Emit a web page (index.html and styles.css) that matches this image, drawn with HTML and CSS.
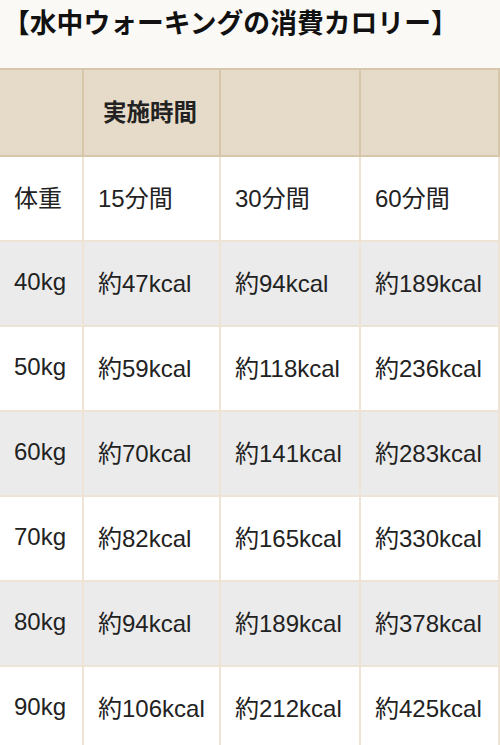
FILE: index.html
```html
<!DOCTYPE html>
<html lang="ja">
<head>
<meta charset="utf-8">
<link rel="stylesheet" href="styles.css">
</head>
<body>
<div class="page">
  <h2 class="title">【水中ウォーキングの消費カロリー】</h2>
  <table class="kcal">
    <colgroup>
      <col class="c1"><col class="c2"><col class="c3"><col class="c4">
    </colgroup>
    <thead>
      <tr><th></th><th>実施時間</th><th></th><th></th></tr>
    </thead>
    <tbody>
      <tr><td>体重</td><td>15分間</td><td>30分間</td><td>60分間</td></tr>
      <tr class="alt"><td>40kg</td><td>約47kcal</td><td>約94kcal</td><td>約189kcal</td></tr>
      <tr><td>50kg</td><td>約59kcal</td><td>約118kcal</td><td>約236kcal</td></tr>
      <tr class="alt"><td>60kg</td><td>約70kcal</td><td>約141kcal</td><td>約283kcal</td></tr>
      <tr><td>70kg</td><td>約82kcal</td><td>約165kcal</td><td>約330kcal</td></tr>
      <tr class="alt"><td>80kg</td><td>約94kcal</td><td>約189kcal</td><td>約378kcal</td></tr>
      <tr><td>90kg</td><td>約106kcal</td><td>約212kcal</td><td>約425kcal</td></tr>
    </tbody>
  </table>
</div>
</body>
</html>
```
FILE: styles.css
```css
html, body {
  margin: 0;
  padding: 0;
  background: #fbf9f6;
}
body {
  font-family: "Liberation Sans", "Noto Sans CJK JP", sans-serif;
  color: #222;
  overflow: hidden;
}
.page {
  width: 500px;
}
.title {
  margin: 0 0 26px 0;
  padding: 6px 0 0 3px;
  font-size: 26.8px;
  line-height: 36px;
  font-weight: bold;
  color: #111;
}
.kcal {
  border-collapse: collapse;
  table-layout: fixed;
  width: 500px;
  margin-left: -2px;
  font-size: 24px;
}
.c1 { width: 84px; }
.c2 { width: 137px; }
.c3 { width: 140px; }
.c4 { width: 139px; }
.kcal th, .kcal td {
  height: 85px;
  padding: 0 0 4px 14px;
  text-align: left;
  vertical-align: middle;
  box-sizing: border-box;
}
.kcal th {
  height: 87px;
  padding-left: 19px;
  background: #e6dbc8;
  border: 2px solid #d6c6aa;
  font-weight: bold;
  font-size: 23.5px;
}
.kcal td {
  background: #ffffff;
  border: 2px solid #ede4d6;
}
.kcal tr.alt td {
  background: #ebebeb;
}
```
